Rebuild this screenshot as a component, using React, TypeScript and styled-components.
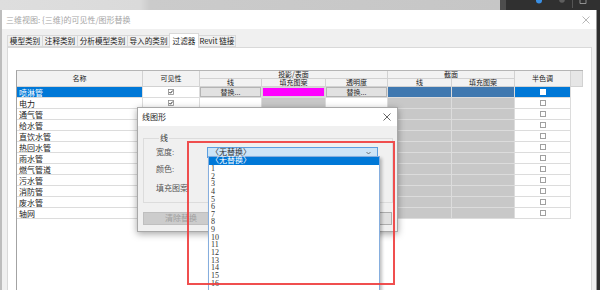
import React from 'react';
import styled, { createGlobalStyle } from 'styled-components';

const GlobalStyle = createGlobalStyle`
  html, body { margin: 0; padding: 0; }
  body {
    width: 600px; height: 290px; overflow: hidden;
    font-family: "Noto Sans CJK SC", "Noto Sans", sans-serif;
  }
  * { box-sizing: border-box; }
`;

const COLS = '126px 57px 62px 64px 62px 64px 63px 56px 12px';

const Page = styled.div`
  position: relative;
  width: 600px;
  height: 290px;
  overflow: hidden;
  display: flex;
  flex-direction: column;
  background: #2e2e2e;
`;

const TopStrip = styled.div`
  height: 10px;
  flex: none;
  display: flex;
`;

const StripLight = styled.div`
  width: 500px;
  background: linear-gradient(90deg, #dedede 0, #dadada 140px, #cbcbcb 150px, #c6c6c6 100%);
`;

const StripDark = styled.div`
  flex: 1;
  background: #303030;
  display: flex;
`;

const MainRow = styled.div`
  flex: 1;
  display: flex;
  min-height: 0;
`;

const LeftEdge = styled.div`
  width: 2px;
  background: #bdbdbd;
`;

const Window = styled.div`
  width: 595px;
  display: flex;
  flex-direction: column;
  background: #f0f0f0;
  border-right: 1px solid #9a9a9a;
`;

const TitleBar = styled.div<{ $h: number }>`
  height: ${p => p.$h}px;
  flex: none;
  background: #ffffff;
  display: flex;
  align-items: center;
  padding: 0 6px 0 4px;
`;

const TitleText = styled.span<{ $dim?: boolean }>`
  font-size: 8px;
  line-height: 1;
  color: ${p => (p.$dim ? '#a6a6a6' : '#1e1e1e')};
  white-space: nowrap;
`;

const CloseBox = styled.div`
  margin-left: auto;
  width: 9px;
  height: 9px;
  display: flex;
  align-items: center;
  justify-content: center;
`;

const WindowBody = styled.div`
  flex: 1;
  display: flex;
  flex-direction: column;
  padding: 4px 4px 0 5px;
  min-height: 0;
`;

const TabRow = styled.div`
  height: 14px;
  display: flex;
  align-items: flex-end;
  flex: none;
`;

const Tab = styled.div<{ $active?: boolean; $w: number }>`
  width: ${p => p.$w}px;
  height: ${p => (p.$active ? 15 : 12)}px;
  margin-bottom: ${p => (p.$active ? -1 : 0)}px;
  position: relative;
  z-index: ${p => (p.$active ? 2 : 1)};
  background: ${p => (p.$active ? '#ffffff' : '#f0f0f0')};
  border: 1px solid #d9d9d9;
  border-bottom: ${p => (p.$active ? 'none' : '1px solid #d9d9d9')};
  margin-right: -1px;
  display: flex;
  align-items: center;
  justify-content: center;
  font-size: 7.6px;
  line-height: 1;
  color: #1a1a1a;
  white-space: nowrap;
`;

const TabPanel = styled.div`
  flex: 1;
  background: #ffffff;
  border: 1px solid #d9d9d9;
  border-bottom: none;
  padding: 22px 8px 0 8px;
  min-height: 0;
  display: flex;
`;

const Table = styled.div`
  width: 567px;
  display: flex;
  flex-direction: column;
  border-left: 1px solid #a3a3a3;
  border-top: 1px solid #b5b5b5;
`;

const Header = styled.div`
  display: grid;
  grid-template-columns: ${COLS};
  grid-template-rows: 8px 8px;
  flex: none;
`;

const HeadCell = styled.div<{ $col: string; $row: string; $blank?: boolean }>`
  grid-column: ${p => p.$col};
  grid-row: ${p => p.$row};
  background: ${p => (p.$blank ? '#e6e6e6' : '#f2f2f2')};
  border-right: 1px solid #d2d2d2;
  border-bottom: 1px solid #d2d2d2;
  display: flex;
  align-items: center;
  justify-content: center;
  font-size: 7px;
  line-height: 7px;
  color: #1a1a1a;
  white-space: nowrap;
`;

const Row = styled.div`
  display: grid;
  grid-template-columns: ${COLS};
  height: 11px;
  flex: none;
`;

type Tone = 'white' | 'gray' | 'sel' | 'selDark' | 'light' | 'none';

const toneBg: Record<Tone, string> = {
  white: '#ffffff',
  gray: '#c8c8c8',
  sel: '#0078d7',
  selDark: '#3f78b0',
  light: '#e4e4e4',
  none: 'transparent',
};

const Cell = styled.div<{ $tone: Tone; $left?: boolean }>`
  background: ${p => toneBg[p.$tone]};
  color: ${p => (p.$tone === 'sel' ? '#ffffff' : '#1a1a1a')};
  border-right: ${p => (p.$tone === 'none' ? 'none' : '1px solid #dcdcdc')};
  border-bottom: ${p => (p.$tone === 'none' ? 'none' : '1px solid #dcdcdc')};
  display: flex;
  align-items: center;
  justify-content: ${p => (p.$left ? 'flex-start' : 'center')};
  padding-left: ${p => (p.$left ? 2 : 0)}px;
  font-size: 8px;
  line-height: 9px;
  white-space: nowrap;
  overflow: hidden;
`;

const ReplaceBtn = styled.div`
  flex: 1;
  align-self: stretch;
  background: #e1e1e1;
  border: 1px solid #b4b4b4;
  display: flex;
  align-items: center;
  justify-content: center;
  font-size: 7px;
  line-height: 7px;
  color: #333;
`;

const Swatch = styled.div`
  flex: 1;
  align-self: stretch;
  margin: 1px;
  background: #ff00ff;
  outline: 1px solid #d6d6d6;
`;

const Box = styled.span<{ $white?: boolean }>`
  width: 6px;
  height: 6px;
  border: 1px solid ${p => (p.$white ? '#ffffff' : '#a0a0a0')};
  background: #ffffff;
  display: block;
`;

const Filler = styled.div`
  flex: 1;
  background: #ffffff;
`;

/* ---------- overlay dialog ---------- */

const Dialog = styled.div`
  position: absolute;
  left: 137px;
  top: 107px;
  width: 261px;
  height: 125px;
  background: #f0f0f0;
  border: 1px solid #a8a8a8;
  box-shadow: 0 2px 7px rgba(0, 0, 0, 0.35);
  display: flex;
  flex-direction: column;
  z-index: 5;
`;

const DialogBody = styled.div`
  flex: 1;
  padding: 8px 4px 0 5px;
  display: flex;
  flex-direction: column;
`;

const GroupBox = styled.fieldset`
  margin: 0;
  width: 250px;
  height: 69px;
  border: 1px solid #dcdcdc;
  padding: 5px 0 0 12px;
  min-width: 0;
`;

const GroupLegend = styled.legend`
  font-size: 8px;
  line-height: 8px;
  padding: 0 1px;
  margin-left: 3px;
  color: #333;
`;

const Form = styled.div`
  display: grid;
  grid-template-columns: 51px 171px;
  grid-template-rows: 11px 17px 19px;
  align-items: end;
`;

const FieldLabel = styled.div`
  height: 11px;
  display: flex;
  align-items: center;
  font-size: 8px;
  line-height: 1;
  color: #555;
  font-family: "Liberation Serif", "Noto Sans CJK SC", serif;
  white-space: nowrap;
`;

const Combo = styled.div`
  height: 11px;
  background: #cce4f7;
  border: 1px solid #5a9ee0;
  display: flex;
  align-items: center;
  padding: 0 6px 0 3px;
  font-size: 8px;
  line-height: 1;
  color: #333;
  font-family: "Liberation Serif", "Noto Sans CJK SC", serif;
`;

const ComboText = styled.span`
  flex: 1;
`;

const ButtonRow = styled.div`
  margin-top: 9px;
  display: flex;
  justify-content: space-between;
  padding-right: 1px;
`;

const DlgButton = styled.div<{ $w: number; $disabled?: boolean }>`
  width: ${p => p.$w}px;
  height: 13px;
  background: ${p => (p.$disabled ? '#cccccc' : '#e1e1e1')};
  border: 1px solid ${p => (p.$disabled ? '#bfbfbf' : '#adadad')};
  color: ${p => (p.$disabled ? '#a0a0a0' : '#222')};
  font-size: 8px;
  line-height: 1;
  display: flex;
  align-items: center;
  justify-content: center;
  font-family: "Liberation Serif", "Noto Sans CJK SC", serif;
`;

const DropList = styled.div`
  position: absolute;
  left: 208px;
  top: 156px;
  width: 172px;
  height: 140px;
  background: #ffffff;
  border: 1px solid #86aede;
  box-shadow: 2px 2px 3px rgba(0, 0, 0, 0.25);
  display: flex;
  flex-direction: column;
  z-index: 6;
`;

const ListItem = styled.div<{ $sel?: boolean }>`
  height: ${p => (p.$sel ? 8 : 7.65)}px;
  line-height: ${p => (p.$sel ? 8 : 7.65)}px;
  flex: none;
  padding-left: 2px;
  background: ${p => (p.$sel ? '#0078d7' : 'transparent')};
  color: ${p => (p.$sel ? '#ffffff' : '#333')};
  font-family: "Liberation Serif", "Noto Sans CJK SC", serif;
  font-size: 8px;
  white-space: nowrap;
`;

const RedMark = styled.div`
  position: absolute;
  left: 187px;
  top: 141px;
  width: 208px;
  height: 144px;
  border: 2px solid rgba(238, 60, 60, 0.9);
  z-index: 7;
  pointer-events: none;
`;

/* ---------- drawings ---------- */

const CloseIcon = ({ color }: { color: string }) => (
  <svg width="8" height="8" viewBox="0 0 8 8">
    <path d="M0.5 0.5 L7.5 7.5 M7.5 0.5 L0.5 7.5" stroke={color} strokeWidth="0.9" fill="none" />
  </svg>
);

const Check = () => (
  <svg width="6" height="6" viewBox="0 0 6 6">
    <rect x="0.5" y="0.5" width="5" height="5" fill="#fff" stroke="#8a8a8a" strokeWidth="0.8" />
    <path d="M1.4 3 L2.5 4.2 L4.7 1.6" stroke="#333" strokeWidth="1" fill="none" />
  </svg>
);

const Chevron = () => (
  <svg width="5" height="4" viewBox="0 0 5 4">
    <path d="M0.5 1 L2.5 3 L4.5 1" stroke="#555" strokeWidth="0.8" fill="none" />
  </svg>
);

const StripIcons = () => (
  <svg width="100" height="10" viewBox="0 0 100 10">
    <rect x="0" y="0" width="6" height="10" fill="#4d4d4d" />
    <circle cx="39" cy="0.5" r="3" fill="#3a8fe3" />
    <circle cx="62" cy="0" r="2.8" fill="#5e5e5e" />
    <line x1="72.5" y1="0" x2="72.5" y2="8" stroke="#555" strokeWidth="1" />
    <path d="M80 -1 L80 3.5 L86 3.5 L86 -1" stroke="#9a9a9a" strokeWidth="0.9" fill="none" />
  </svg>
);

/* ---------- data ---------- */

const names = ['喷淋管', '电力', '通气管', '给水管', '直饮水管', '热回水管', '雨水管', '燃气管道', '污水管', '消防管', '废水管', '轴网'];
const tabs: { label: string; w: number; active?: boolean }[] = [
  { label: '模型类别', w: 36 },
  { label: '注释类别', w: 36 },
  { label: '分析模型类别', w: 51 },
  { label: '导入的类别', w: 43 },
  { label: '过滤器', w: 30, active: true },
  { label: 'Revit 链接', w: 38 },
];
const widths = ['1', '2', '3', '4', '5', '6', '7', '8', '9', '10', '11', '12', '13', '14', '15', '16'];

export default function App() {
  return (
    <>
      <GlobalStyle />
      <Page>
        <TopStrip>
          <StripLight />
          <StripDark>
            <StripIcons />
          </StripDark>
        </TopStrip>
        <MainRow>
          <LeftEdge />
          <Window>
            <TitleBar $h={19}>
              <TitleText $dim>三维视图: {'{三维}'}的可见性/图形替换</TitleText>
              <CloseBox>
                <CloseIcon color="#b0b0b0" />
              </CloseBox>
            </TitleBar>
            <WindowBody>
              <TabRow>
                {tabs.map(t => (
                  <Tab key={t.label} $w={t.w} $active={t.active}>
                    {t.label}
                  </Tab>
                ))}
              </TabRow>
              <TabPanel>
                <Table>
                  <Header>
                    <HeadCell $col="1" $row="1 / 3">名称</HeadCell>
                    <HeadCell $col="2" $row="1 / 3">可见性</HeadCell>
                    <HeadCell $col="3 / 6" $row="1">投影/表面</HeadCell>
                    <HeadCell $col="3" $row="2">线</HeadCell>
                    <HeadCell $col="4" $row="2">填充图案</HeadCell>
                    <HeadCell $col="5" $row="2">透明度</HeadCell>
                    <HeadCell $col="6 / 8" $row="1">截面</HeadCell>
                    <HeadCell $col="6" $row="2">线</HeadCell>
                    <HeadCell $col="7" $row="2">填充图案</HeadCell>
                    <HeadCell $col="8" $row="1 / 3">半色调</HeadCell>
                    <HeadCell $col="9" $row="1 / 3" $blank />
                  </Header>
                  {names.map((n, i) => {
                    const sel = i === 0;
                    return (
                      <Row key={n}>
                        <Cell $tone={sel ? 'sel' : 'white'} $left>{n}</Cell>
                        <Cell $tone="white"><Check /></Cell>
                        {sel ? (
                          <Cell $tone="light"><ReplaceBtn>替换...</ReplaceBtn></Cell>
                        ) : (
                          <Cell $tone="white" />
                        )}
                        {sel ? (
                          <Cell $tone="light"><Swatch /></Cell>
                        ) : (
                          <Cell $tone="gray" />
                        )}
                        {sel ? (
                          <Cell $tone="light"><ReplaceBtn>替换...</ReplaceBtn></Cell>
                        ) : (
                          <Cell $tone="white" />
                        )}
                        <Cell $tone={sel ? 'selDark' : 'gray'} />
                        <Cell $tone={sel ? 'selDark' : 'gray'} />
                        <Cell $tone={sel ? 'sel' : 'white'}><Box $white={sel} /></Cell>
                        <Cell $tone="none" />
                      </Row>
                    );
                  })}
                  <Filler />
                </Table>
              </TabPanel>
            </WindowBody>
          </Window>
        </MainRow>

        <Dialog>
          <TitleBar $h={18}>
            <TitleText>线图形</TitleText>
            <CloseBox>
              <CloseIcon color="#555" />
            </CloseBox>
          </TitleBar>
          <DialogBody>
            <GroupBox>
              <GroupLegend>线</GroupLegend>
              <Form>
                <FieldLabel>宽度:</FieldLabel>
                <Combo>
                  <ComboText>〈无替换〉</ComboText>
                  <Chevron />
                </Combo>
                <FieldLabel>颜色:</FieldLabel>
                <div />
                <FieldLabel>填充图案</FieldLabel>
                <div />
              </Form>
            </GroupBox>
            <ButtonRow>
              <DlgButton $w={76} $disabled>清除替换</DlgButton>
              <DlgButton $w={70}>确定</DlgButton>
            </ButtonRow>
          </DialogBody>
        </Dialog>

        <DropList>
          <ListItem $sel>〈无替换〉</ListItem>
          {widths.map(w => (
            <ListItem key={w}>{w}</ListItem>
          ))}
        </DropList>

        <RedMark />
      </Page>
    </>
  );
}
